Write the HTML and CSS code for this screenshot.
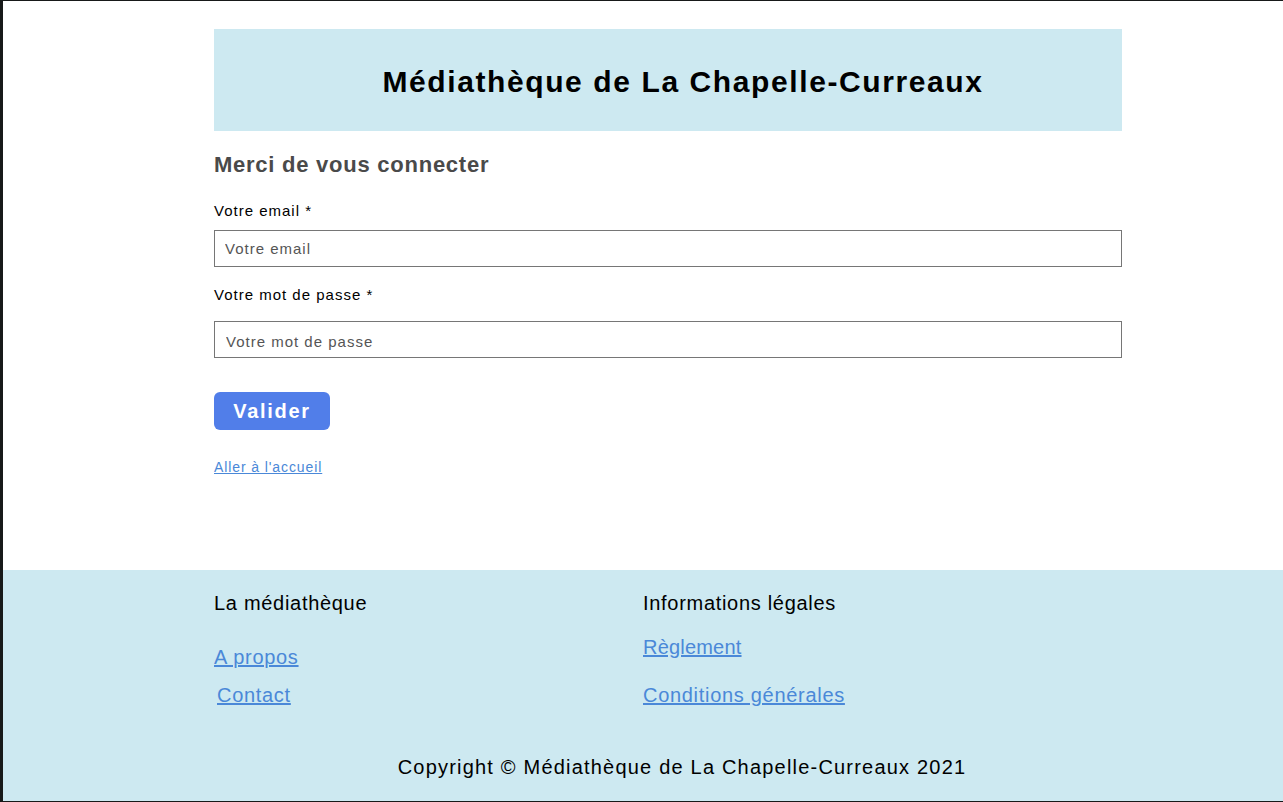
FILE: index.html
```html
<!DOCTYPE html>
<html lang="fr">
<head>
<meta charset="utf-8">
<title>Connexion - Médiathèque de La Chapelle-Curreaux</title>
<link rel="stylesheet" href="styles.css">
</head>
<body>
<div class="page">
  <main class="main">
    <header class="banner">
      <h1 class="banner-title">Médiathèque de La Chapelle-Curreaux</h1>
    </header>
    <h2 class="form-title">Merci de vous connecter</h2>
    <form class="login-form">
      <label class="field-label" for="email">Votre email *</label>
      <input class="field-input" id="email" type="email" placeholder="Votre email">
      <label class="field-label field-label-second" for="password">Votre mot de passe *</label>
      <input class="field-input field-input-second" id="password" type="password" placeholder="Votre mot de passe">
      <div class="actions">
        <button class="submit-btn" type="button">Valider</button>
      </div>
    </form>
    <a class="home-link" href="#">Aller à l'accueil</a>
  </main>
  <footer class="footer">
    <div class="footer-inner">
      <div class="footer-cols">
        <div class="footer-col">
          <h3 class="footer-heading">La médiathèque</h3>
          <a class="footer-link link-apropos" href="#">A propos</a>
          <a class="footer-link link-contact" href="#">Contact</a>
        </div>
        <div class="footer-col">
          <h3 class="footer-heading">Informations légales</h3>
          <a class="footer-link link-reglement" href="#">Règlement</a>
          <a class="footer-link link-conditions" href="#">Conditions générales</a>
        </div>
      </div>
      <p class="copyright">Copyright © Médiathèque de La Chapelle-Curreaux 2021</p>
    </div>
  </footer>
</div>
</body>
</html>
```

FILE: styles.css
```css
html, body {
  margin: 0;
  padding: 0;
  height: 100%;
}
body {
  background: #ffffff;
  font-family: "Liberation Sans", Arial, sans-serif;
  color: #000;
  box-sizing: border-box;
  border-top: 1px solid #171919;
  border-left: 3px solid #171919;
  border-bottom: 1px solid #171919;
  overflow: hidden;
}
.page {
  display: flex;
  flex-direction: column;
  height: 800px;
}
.main {
  width: 908px;
  margin-left: 211px;
  padding-top: 28px;
  flex: 1;
  display: flex;
  flex-direction: column;
  align-items: flex-start;
}
.banner {
  width: 100%;
  height: 102px;
  background: #cde9f1;
  display: flex;
  align-items: center;
  justify-content: center;
  padding-left: 30px;
  padding-top: 4px;
  box-sizing: border-box;
}
.banner-title {
  margin: 0;
  font-size: 30px;
  line-height: 34px;
  font-weight: bold;
  letter-spacing: 1.6px;
}
.form-title {
  margin: 21px 0 0;
  font-size: 22px;
  font-weight: bold;
  color: #4a4a4a;
  letter-spacing: 0.75px;
  line-height: 26px;
}
.login-form {
  width: 100%;
  display: flex;
  flex-direction: column;
  margin-top: 24px;
}
.field-label {
  font-size: 15px;
  line-height: 17px;
  letter-spacing: 1px;
}
.field-input {
  margin-top: 11px;
  height: 37px;
  box-sizing: border-box;
  border: 1px solid #767676;
  border-radius: 0;
  padding: 0 10px;
  font-family: "Liberation Sans", Arial, sans-serif;
  font-size: 15px;
  letter-spacing: 1px;
  outline: none;
}
.field-input::placeholder {
  color: #555;
}
.field-input-second {
  margin-top: 18px;
  padding-left: 11px;
  padding-top: 4px;
}
.field-label-second {
  margin-top: 19px;
}
.actions {
  margin-top: 34px;
}
.submit-btn {
  width: 116px;
  height: 38px;
  border: none;
  border-radius: 6px;
  background: #517ee9;
  color: #fff;
  font-family: "Liberation Sans", Arial, sans-serif;
  font-size: 20px;
  font-weight: bold;
  letter-spacing: 1.7px;
  padding: 0;
}
.home-link {
  margin-top: 29px;
  font-size: 14px;
  color: #4a88d8;
  letter-spacing: 0.9px;
}
.footer {
  height: 231px;
  background: #cde9f1;
}
.footer-inner {
  width: 936px;
  margin-left: 211px;
  display: flex;
  flex-direction: column;
}
.footer-cols {
  display: flex;
  padding-top: 21px;
}
.footer-col {
  display: flex;
  flex-direction: column;
  align-items: flex-start;
  width: 429px;
}
.footer-heading {
  margin: 0;
  font-size: 20px;
  font-weight: normal;
  letter-spacing: 0.7px;
  line-height: 24px;
}
.footer-link {
  font-size: 20px;
  color: #4a88d8;
  letter-spacing: 0.7px;
  line-height: 24px;
}
.link-apropos { margin-top: 30px; }
.link-contact { margin-top: 14px; margin-left: 3px; }
.link-reglement { margin-top: 20px; letter-spacing: 0.2px; }
.link-conditions { margin-top: 24px; }
.copyright {
  margin: 48px 0 0;
  text-align: center;
  font-size: 20px;
  letter-spacing: 1.2px;
  line-height: 24px;
}
```
